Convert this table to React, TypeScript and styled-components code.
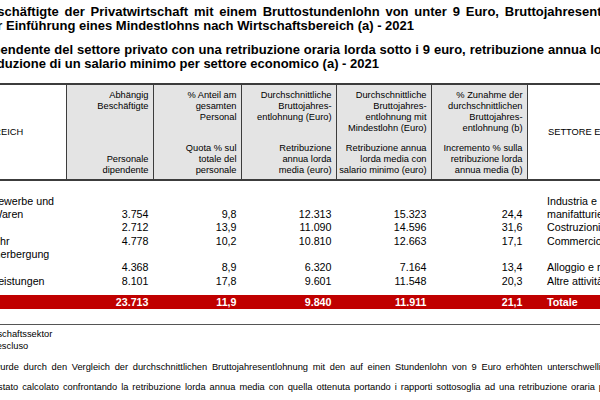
import React from 'react';
import styled, { createGlobalStyle, css } from 'styled-components';

const GlobalStyle = createGlobalStyle`
  html, body { margin: 0; padding: 0; background: #fff; }
  body {
    width: 600px;
    height: 400px;
    overflow: hidden;
    font-family: "Liberation Sans", Arial, sans-serif;
    color: #000;
  }
`;

// the page is a cut from a wider pdf page, so it starts left of the window
const Page = styled.div`
  width: 900px;
  margin-left: -85px;
  padding-top: 5px;
`;

const Title = styled.div<{ $ws?: number; $gap?: number }>`
  font-size: 13px;
  font-weight: bold;
  line-height: 13.7px;
  white-space: nowrap;
  word-spacing: ${p => p.$ws ?? 0}px;
  margin-top: ${p => p.$gap ?? 0}px;
`;

const cols = '151px 87px 88px 95px 95px 96px 1fr';

const HeadRow = styled.div`
  display: grid;
  grid-template-columns: ${cols};
  height: 98px;
  box-sizing: border-box;
  margin-top: 13px;
  border-top: 2px solid #3c3c3c;
  border-bottom: 2px solid #3c3c3c;
  font-size: 9.3px;
  line-height: 11px;
`;

const SectorHead = styled.div<{ $it?: boolean }>`
  display: flex;
  align-items: center;
  white-space: nowrap;
  ${p => p.$it && css`
    padding-left: 20px;
    border-left: 1px solid #3c3c3c;
  `}
`;

const HeadCell = styled.div`
  display: flex;
  flex-direction: column;
  justify-content: space-between;
  background: #e4e4e4;
  border-left: 1px solid #3c3c3c;
  padding: 5px 4.5px 3px 0;
  text-align: right;
  white-space: pre;
`;

const Body = styled.div`
  margin-top: 13.4px;
`;

const Row = styled.div<{ $total?: boolean }>`
  display: grid;
  grid-template-columns: ${cols};
  font-size: 10.7px;
  line-height: 13.3px;
  ${p => p.$total && css`
    margin-top: 7.5px;
    background: #c00000;
    color: #fff;
    font-weight: bold;
    line-height: 14px;
  `}
`;

const Label = styled.div`
  white-space: pre;
`;

const Num = styled.div`
  align-self: end;
  text-align: right;
  padding-right: 4.5px;
`;

const ItLabel = styled.div<{ $bottom?: boolean }>`
  padding-left: 20px;
  white-space: pre;
  align-self: ${p => (p.$bottom ? 'end' : 'start')};
`;

const Rule = styled.div`
  margin-top: 15px;
  border-top: 1.5px solid #555;
`;

const Notes = styled.div`
  margin-top: 3.5px;
  font-size: 9.3px;
  line-height: 11.7px;
`;

const Note = styled.div<{ $ws?: number; $gap?: number }>`
  display: flex;
  white-space: nowrap;
  word-spacing: ${p => p.$ws ?? 0}px;
  margin-top: ${p => p.$gap ?? 0}px;
`;

const Mark = styled.span<{ $w?: number }>`
  flex: none;
  width: ${p => p.$w ?? 16}px;
`;

const heads = [
  ['Abhängig\nBeschäftigte', 'Personale\ndipendente'],
  ['% Anteil am\ngesamten\nPersonal', 'Quota % sul\ntotale del\npersonale'],
  ['Durchschnittliche\nBruttojahres-\nentlohnung (Euro)', 'Retribuzione\nannua lorda\nmedia (euro)'],
  ['Durchschnittliche\nBruttojahres-\nentlohnung mit\nMindestlohn (Euro)', 'Retribuzione annua\nlorda media con\nsalario minimo (euro)'],
  ['% Zunahme der\ndurchschnittlichen\nBruttojahres-\nentlohnung (b)', 'Incremento % sulla\nretribuzione lorda\nannua media (b)'],
];

const rows = [
  { de: 'Verarbeitendes Gewerbe und\nHerstellung von Waren', it: 'Industria e\nmanifatturiero', itBottom: false, values: ['3.754', '9,8', '12.313', '15.323', '24,4'] },
  { de: 'Baugewerbe', it: 'Costruzioni', itBottom: false, values: ['2.712', '13,9', '11.090', '14.596', '31,6'] },
  { de: 'Handel und Verkehr', it: 'Commercio, trasporto e magazzinaggio', itBottom: false, values: ['4.778', '10,2', '10.810', '12.663', '17,1'] },
  { de: 'Gastgewerbe/Beherbergung\nund Gastronomie', it: 'Alloggio e ristorazione', itBottom: true, values: ['4.368', '8,9', '6.320', '7.164', '13,4'] },
  { de: 'Sonstigen Dienstleistungen', it: 'Altre attività di servizi', itBottom: false, values: ['8.101', '17,8', '9.601', '11.548', '20,3'] },
];

const total = ['23.713', '11,9', '9.840', '11.911', '21,1'];

export default function App() {
  return (
    <>
      <GlobalStyle />
      <Page>
        <Title $ws={2.2}>
          Abhängig Beschäftigte der Privatwirtschaft mit einem Bruttostundenlohn von unter 9 Euro, Bruttojahresentlohnung und
        </Title>
        <Title>Euro nach der Einführung eines Mindestlohns nach Wirtschaftsbereich (a) - 2021</Title>
        <Title $ws={0.3} $gap={10.6}>
          Personale dipendente del settore privato con una retribuzione oraria lorda sotto i 9 euro, retribuzione annua lorda media
        </Title>
        <Title>e dopo l'introduzione di un salario minimo per settore economico (a) - 2021</Title>

        <HeadRow>
          <SectorHead>WIRTSCHAFTSBEREICH</SectorHead>
          {heads.map(([de, it], i) => (
            <HeadCell key={i}>
              <div>{de}</div>
              <div>{it}</div>
            </HeadCell>
          ))}
          <SectorHead $it>SETTORE ECONOMICO</SectorHead>
        </HeadRow>

        <Body>
          {rows.map((r, i) => (
            <Row key={i}>
              <Label>{r.de}</Label>
              {r.values.map((v, j) => <Num key={j}>{v}</Num>)}
              <ItLabel $bottom={r.itBottom}>{r.it}</ItLabel>
            </Row>
          ))}
          <Row $total>
            <Label>Insgesamt</Label>
            {total.map((v, j) => <Num key={j}>{v}</Num>)}
            <ItLabel>Totale</ItLabel>
          </Row>
        </Body>

        <Rule />

        <Notes>
          <Note><Mark $w={22}>(a)</Mark>Ohne Landwirtschaftssektor</Note>
          <Note><Mark $w={14}>(a)</Mark>Settore agricolo escluso</Note>
          <Note $ws={2.1} $gap={9.9}>
            <Mark>(b)</Mark>Die Zunahme wurde durch den Vergleich der durchschnittlichen Bruttojahresentlohnung mit den auf einen Stundenlohn von 9 Euro erhöhten unterschwelligen Bruttojahresentlohnungen berechnet.
          </Note>
          <Note $ws={1.4} $gap={8}>
            <Mark $w={17}>(b)</Mark>L'incremento è stato calcolato confrontando la retribuzione lorda annua media con quella ottenuta portando i rapporti sottosoglia ad una retribuzione oraria pari a 9 euro.
          </Note>
        </Notes>
      </Page>
    </>
  );
}
